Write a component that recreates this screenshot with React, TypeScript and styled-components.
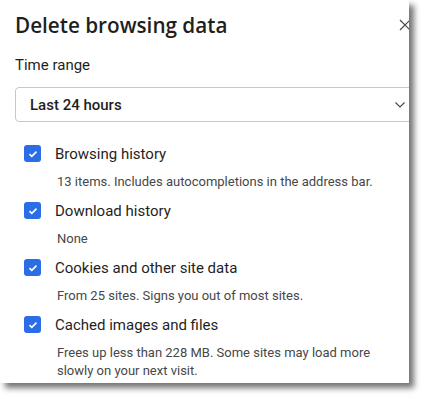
import React from "react";
import styled, { createGlobalStyle } from "styled-components";

const Global = createGlobalStyle`
  html, body { margin: 0; padding: 0; background: #ffffff; }
  body { font-family: "Roboto", "Liberation Sans", sans-serif; }
`;

const Page = styled.div`
  width: 424px;
  height: 399px;
  overflow: hidden;
  background: #ffffff;
`;

const Panel = styled.div`
  width: 409px;
  height: 383px;
  background: #ffffff;
  overflow: hidden;
  box-shadow: 5px 5px 6px rgba(0, 0, 0, 0.55);
`;

const Dialog = styled.div`
  width: 432px;
  box-sizing: border-box;
  padding: 13px 16px 0 15px;
  display: flex;
  flex-direction: column;
`;

const Header = styled.div`
  display: flex;
  align-items: center;
  justify-content: space-between;
  height: 24px;
`;

const Title = styled.h1`
  margin: 0;
  font-family: "Open Sans", "Roboto", sans-serif;
  font-size: 20.7px;
  line-height: 24px;
  font-weight: 600;
  color: #1f1f1f;
`;

const CloseButton = styled.button`
  border: none;
  background: none;
  padding: 0;
  margin-right: 5px;
  width: 12px;
  height: 12px;
  display: flex;
  align-items: center;
  justify-content: center;
  color: #444746;
`;

const FieldLabel = styled.div`
  margin-top: 18px;
  font-size: 15px;
  line-height: 20px;
  color: #1f1f1f;
`;

const Select = styled.div`
  margin-top: 12px;
  height: 35px;
  box-sizing: border-box;
  border: 1px solid #c7c7c7;
  border-radius: 4px;
  display: flex;
  align-items: center;
  justify-content: space-between;
  padding: 0 10px 0 14px;
`;

const SelectValue = styled.span`
  font-size: 15px;
  font-weight: 500;
  color: #1f1f1f;
`;

const List = styled.div`
  margin-top: 22px;
  display: flex;
  flex-direction: column;
  gap: 10px;
  padding-left: 9px;
`;

const Item = styled.div`
  display: grid;
  grid-template-columns: 17px 1fr;
  column-gap: 14px;
  row-gap: 9px;
`;

const Box = styled.span`
  width: 17px;
  height: 17px;
  margin-top: 1px;
  border-radius: 3px;
  background: #2a6de6;
  display: flex;
  align-items: center;
  justify-content: center;
`;

const Label = styled.div`
  font-size: 15px;
  line-height: 20px;
  color: #1f1f1f;
`;

const Desc = styled.div`
  grid-column: 2;
  padding-left: 2px;
  font-size: 13px;
  line-height: 18px;
  color: #474747;
  max-width: 330px;
`;

const items = [
  { label: "Browsing history", desc: "13 items. Includes autocompletions in the address bar." },
  { label: "Download history", desc: "None" },
  { label: "Cookies and other site data", desc: "From 25 sites. Signs you out of most sites." },
  {
    label: "Cached images and files",
    desc: "Frees up less than 228 MB. Some sites may load more slowly on your next visit.",
  },
];

const Check = () => (
  <svg width="10" height="8" viewBox="0 0 10 8">
    <path d="M1.5 4.2 L3.8 6.4 L8.5 1.6" fill="none" stroke="#fff" strokeWidth="1.6" />
  </svg>
);

export default function App() {
  return (
    <Page>
      <Global />
      <Panel>
        <Dialog>
          <Header>
            <Title>Delete browsing data</Title>
            <CloseButton aria-label="Close">
              <svg width="12" height="12" viewBox="0 0 12 12">
                <path d="M1 1 L11 11 M11 1 L1 11" stroke="#444746" strokeWidth="1.2" />
              </svg>
            </CloseButton>
          </Header>
          <FieldLabel>Time range</FieldLabel>
          <Select>
            <SelectValue>Last 24 hours</SelectValue>
            <svg width="10" height="6" viewBox="0 0 10 6">
              <path d="M0.5 0.5 L5 5 L9.5 0.5" fill="none" stroke="#444746" strokeWidth="1.1" />
            </svg>
          </Select>
          <List>
            {items.map((it) => (
              <Item key={it.label}>
                <Box>
                  <Check />
                </Box>
                <Label>{it.label}</Label>
                <Desc>{it.desc}</Desc>
              </Item>
            ))}
          </List>
        </Dialog>
      </Panel>
    </Page>
  );
}
